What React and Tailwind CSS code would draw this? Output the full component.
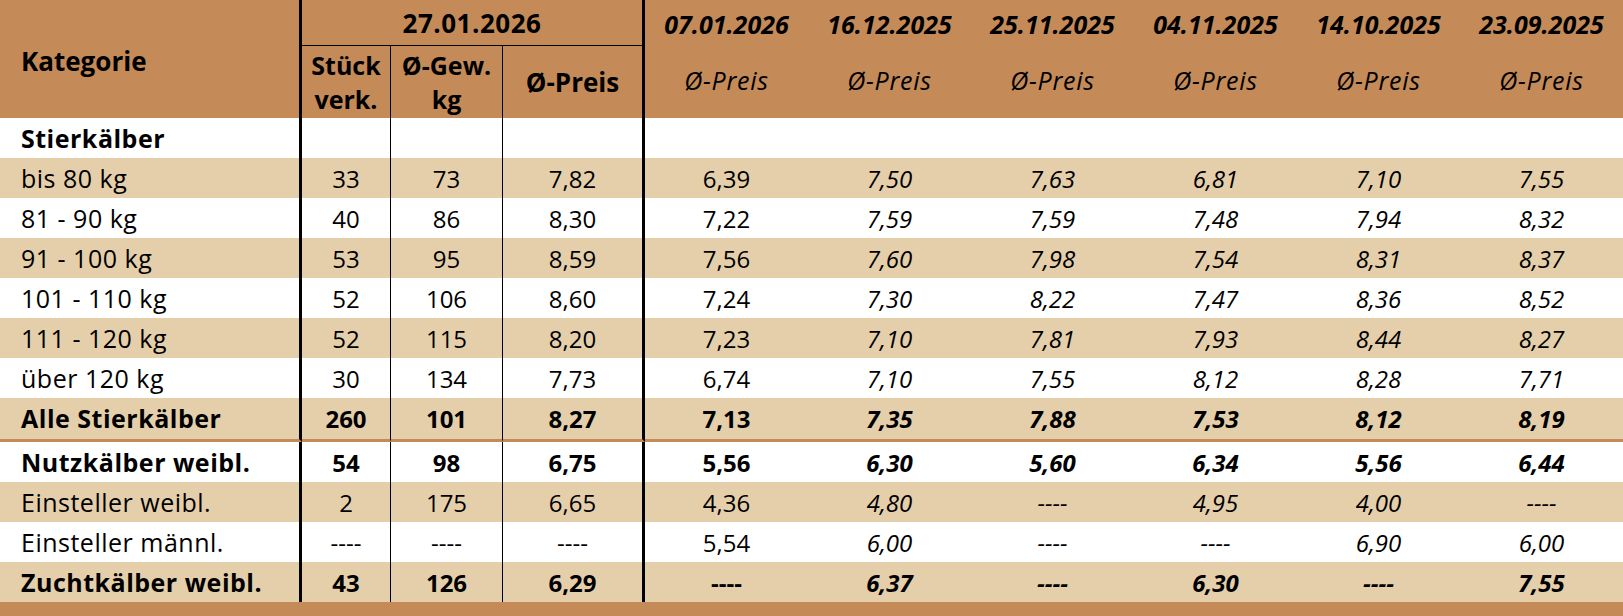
import React from 'react';

const rows = [
  { label: 'Stierkälber', bold: true, cur: ['', '', ''], prev: ['', '', '', '', '', ''] },
  { label: 'bis 80 kg', cur: ['33', '73', '7,82'], prev: ['6,39', '7,50', '7,63', '6,81', '7,10', '7,55'] },
  { label: '81 - 90 kg', cur: ['40', '86', '8,30'], prev: ['7,22', '7,59', '7,59', '7,48', '7,94', '8,32'] },
  { label: '91 - 100 kg', cur: ['53', '95', '8,59'], prev: ['7,56', '7,60', '7,98', '7,54', '8,31', '8,37'] },
  { label: '101 - 110 kg', cur: ['52', '106', '8,60'], prev: ['7,24', '7,30', '8,22', '7,47', '8,36', '8,52'] },
  { label: '111 - 120 kg', cur: ['52', '115', '8,20'], prev: ['7,23', '7,10', '7,81', '7,93', '8,44', '8,27'] },
  { label: 'über 120 kg', cur: ['30', '134', '7,73'], prev: ['6,74', '7,10', '7,55', '8,12', '8,28', '7,71'] },
  { label: 'Alle Stierkälber', bold: true, sep: true, cur: ['260', '101', '8,27'], prev: ['7,13', '7,35', '7,88', '7,53', '8,12', '8,19'] },
  { label: 'Nutzkälber weibl.', bold: true, cur: ['54', '98', '6,75'], prev: ['5,56', '6,30', '5,60', '6,34', '5,56', '6,44'] },
  { label: 'Einsteller weibl.', cur: ['2', '175', '6,65'], prev: ['4,36', '4,80', '----', '4,95', '4,00', '----'] },
  { label: 'Einsteller männl.', cur: ['----', '----', '----'], prev: ['5,54', '6,00', '----', '----', '6,90', '6,00'] },
  { label: 'Zuchtkälber weibl.', bold: true, cur: ['43', '126', '6,29'], prev: ['----', '6,37', '----', '6,30', '----', '7,55'] },
];

const dates = ['07.01.2026', '16.12.2025', '25.11.2025', '04.11.2025', '14.10.2025', '23.09.2025'];

const App = () => {
  return (
    <div className="w-[1623px] h-[616px] bg-[#c48b58] overflow-hidden text-black text-[24px] font-['Open_Sans',sans-serif]">
      <div className="grid grid-cols-[302px_89px_112px_142px_repeat(6,1fr)] grid-rows-[46px_72px]">
        {/* Header */}
        <div className="row-span-2 border-r-[3px] border-black flex items-center pl-[21px] pt-[4px] font-bold text-[26px]">Kategorie</div>
        <div className="col-span-3 border-r-[3px] border-b border-black flex items-center justify-center pt-[2px] font-bold text-[26px] tracking-[0.02em]">27.01.2026</div>
        {dates.map((d) => (
          <div key={d} className="flex items-center justify-center pt-[4px] font-bold italic text-[25px]">{d}</div>
        ))}
        <div className="border-r border-black flex items-center justify-center text-center font-bold text-[25px] leading-[34px]">Stück<br />verk.</div>
        <div className="border-r border-black flex items-center justify-center text-center font-bold text-[25px] leading-[34px]">Ø-Gew.<br />kg</div>
        <div className="border-r-[3px] border-black flex items-center justify-center font-bold text-[26px]">Ø-Preis</div>
        {dates.map((d) => (
          <div key={d} className="flex items-center justify-center pb-[3px] italic text-[25px] tracking-[0.03em]">Ø-Preis</div>
        ))}

        {/* Body */}
        {rows.map((r, i) => {
          const bg = i % 2 === 1 ? 'bg-[#e5cfab]' : 'bg-white';
          const base = `h-[40px] flex items-center pt-[1px] ${bg} ${r.bold ? 'font-bold' : ''} ${r.sep ? 'box-content border-b-[3px] border-b-[#c48b58]' : ''}`;
          return (
            <React.Fragment key={r.label}>
              <div className={`${base} pl-[21px] text-[25px] tracking-[0.02em] border-r-[3px] border-r-black`}>{r.label}</div>
              <div className={`${base} justify-center border-r border-r-black`}>{r.cur[0]}</div>
              <div className={`${base} justify-center border-r border-r-black`}>{r.cur[1]}</div>
              <div className={`${base} justify-center border-r-[3px] border-r-black`}>{r.cur[2]}</div>
              {r.prev.map((v, j) => (
                <div key={j} className={`${base} justify-center ${j > 0 ? 'italic' : ''}`}>{v}</div>
              ))}
            </React.Fragment>
          );
        })}
      </div>
    </div>
  );
};

export default App;
